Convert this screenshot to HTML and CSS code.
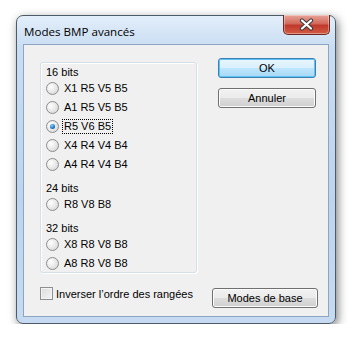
FILE: index.html
```html
<!DOCTYPE html>
<html lang="fr">
<head>
    <meta charset="UTF-8">
    <title>Modes BMP avancés</title>
    <link rel="stylesheet" href="styles.css">
</head>
<body>
    <div class="window">
        <div class="titlebar">
            <span class="title">Modes BMP avancés</span>
            <button class="close" aria-label="Fermer">
                <svg width="15" height="13" viewBox="0 0 15 13">
                    <path d="M3 2.5 L12 10.5 M12 2.5 L3 10.5" stroke="#3b3b3b" stroke-width="4.2" stroke-linecap="round"/>
                    <path d="M3 2.5 L12 10.5 M12 2.5 L3 10.5" stroke="#ffffff" stroke-width="2.2" stroke-linecap="round"/>
                </svg>
            </button>
        </div>

        <div class="client">
            <div class="top">
                <div class="group">
                    <div class="heading">16 bits</div>
                    <label class="radio"><span class="dot"></span><span class="lbl">X1 R5 V5 B5</span></label>
                    <label class="radio"><span class="dot"></span><span class="lbl">A1 R5 V5 B5</span></label>
                    <label class="radio"><span class="dot on"></span><span class="lbl focus">R5 V6 B5</span></label>
                    <label class="radio"><span class="dot"></span><span class="lbl">X4 R4 V4 B4</span></label>
                    <label class="radio"><span class="dot"></span><span class="lbl">A4 R4 V4 B4</span></label>

                    <div class="heading gap">24 bits</div>
                    <label class="radio"><span class="dot"></span><span class="lbl">R8 V8 B8</span></label>

                    <div class="heading gap">32 bits</div>
                    <label class="radio"><span class="dot"></span><span class="lbl">X8 R8 V8 B8</span></label>
                    <label class="radio"><span class="dot"></span><span class="lbl">A8 R8 V8 B8</span></label>
                </div>

                <div class="actions">
                    <button class="btn default">OK</button>
                    <button class="btn">Annuler</button>
                </div>
            </div>

            <div class="bottom">
                <label class="check"><span class="box"></span><span>Inverser l’ordre des rangées</span></label>
                <button class="btn wide">Modes de base</button>
            </div>
        </div>
    </div>
</body>
</html>
```

FILE: styles.css
```css
* { margin: 0; padding: 0; box-sizing: border-box; }
body { background: #ffffff; font-family: Tahoma, "Liberation Sans", sans-serif; font-size: 11px; color: #000; }

.window { position: relative; width: 320px; height: 309px; margin: 15px 0 0 16px; padding: 0 6px 6px 6px; border: 1px solid #4d5a68; border-radius: 7px; background: linear-gradient(180deg, #e3eefa 0%, #c9ddf2 10%, #bcd4ee 60%, #c6dbf1 100%); box-shadow: 2px 3px 10px rgba(0,0,0,0.5); display: flex; flex-direction: column; }
.titlebar { height: 28px; display: flex; align-items: center; }
.title { font-family: "Open Sans", "Noto Sans", sans-serif; font-size: 11.6px; padding-left: 1px; padding-top: 2px; color: #000; }
.close { position: absolute; top: -1px; right: 5px; width: 47px; height: 20px; border: 1px solid #6b2a25; border-top: none; border-radius: 0 0 5px 5px; background: linear-gradient(180deg, #e8a59a 0%, #d2695b 45%, #c0392b 55%, #d35b45 100%); display: flex; align-items: center; justify-content: center; box-shadow: inset 0 0 0 1px rgba(255,255,255,0.35); }

.client { flex: 1; background: #f0f0f0; border: 1px solid #8da5c0; display: flex; flex-direction: column; }
.top { display: flex; padding-top: 13px; }
.group { width: 157px; height: 211px; margin: 4px 0 0 16px; padding: 2px 0 0 5px; border: 1px solid #d5dfe5; border-radius: 3px; box-shadow: inset 1px 1px 0 #ffffff, 1px 1px 0 #ffffff; }
.heading { height: 14px; line-height: 14px; }
.heading.gap { margin-top: 7px; }
.radio { display: flex; align-items: center; height: 19px; }
.dot { width: 13px; height: 13px; border-radius: 50%; border: 1px solid #8d8d8d; background: radial-gradient(circle at 35% 35%, #ffffff 0%, #e6e6e6 55%, #cfcfcf 100%); margin-right: 3px; position: relative; }
.dot.on::after { content: ""; position: absolute; left: 3px; top: 3px; width: 5px; height: 5px; border-radius: 50%; background: radial-gradient(circle at 40% 35%, #8fd2ff 0%, #1d77c0 55%, #0b4a85 100%); }
.lbl { padding: 0 1px; line-height: 13px; border: 1px solid transparent; }
.lbl.focus { border: 1px dotted #000; }

.actions { display: flex; flex-direction: column; gap: 10px; margin-left: 21px; }
.btn { width: 98px; height: 20px; font-family: Tahoma, "Liberation Sans", sans-serif; font-size: 11px; color: #000; border: 1px solid #707070; border-radius: 3px; background: linear-gradient(180deg, #f2f2f2 0%, #ebebeb 48%, #dddddd 52%, #cfcfcf 100%); box-shadow: inset 0 0 0 1px #fcfcfc; }
.btn.default { border-color: #3c7fb1; background: linear-gradient(180deg, #eaf6fd 0%, #d9f0fc 48%, #bee6fd 52%, #a7d9f5 100%); box-shadow: inset 0 0 0 1px #5fc4f5; }
.btn.wide { width: 106px; }

.bottom { display: flex; justify-content: space-between; padding: 15px 10px 0 16px; }
.check { display: flex; align-items: center; gap: 3px; height: 13px; margin-top: -1px; }
.box { width: 13px; height: 13px; border: 1px solid #8e8f8f; background: linear-gradient(135deg, #dcdcdc 0%, #f4f4f4 100%); box-shadow: inset 0 0 0 1px #f4f4f4; }
```
